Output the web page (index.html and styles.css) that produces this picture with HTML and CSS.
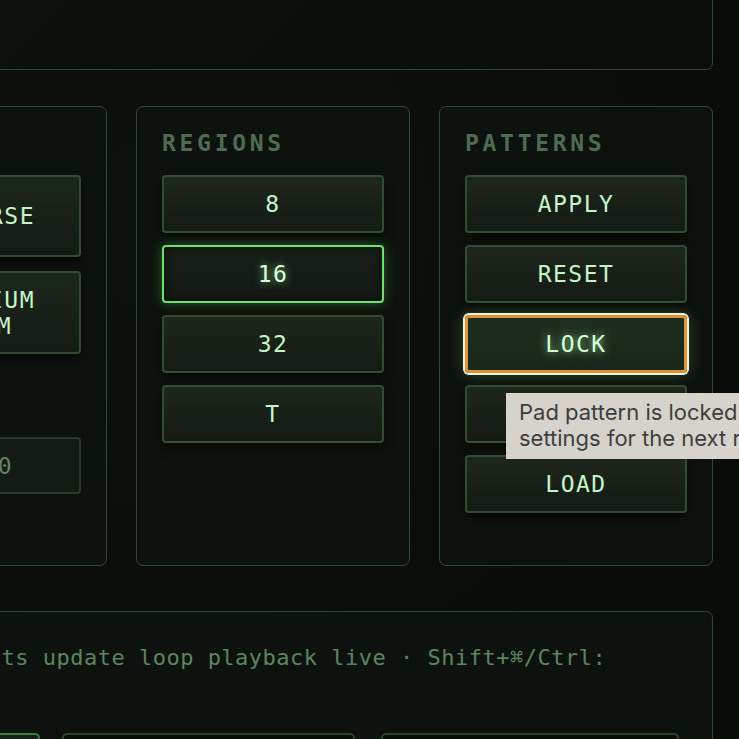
FILE: index.html
```html
<!DOCTYPE html>
<html>

<head>
    <title>Loop Pads</title>
    <link rel="stylesheet" href="styles.css">
</head>

<body>

    <div class="app">
        <section class="panel top-panel"></section>

        <div class="columns">
            <section class="panel col">
                <h3 class="label">MODES</h3>
                <button class="pad tall">&lt; REVERSE</button>
                <button class="pad two-line">X LITHIUM<br>RANDOM</button>
                <label class="field-label" for="seed">SEED</label>
                <input class="field" id="seed" type="text" placeholder="SEED 0">
            </section>

            <section class="panel col">
                <h3 class="label">REGIONS</h3>
                <button class="pad">8</button>
                <button class="pad active">16</button>
                <button class="pad">32</button>
                <button class="pad">T</button>
            </section>

            <section class="panel col">
                <h3 class="label">PATTERNS</h3>
                <button class="pad">APPLY</button>
                <button class="pad">RESET</button>
                <button class="pad locked">LOCK</button>
                <button class="pad">SAVE</button>
                <button class="pad">LOAD</button>
            </section>
        </div>

        <section class="panel hint-panel">
            <p class="hint">Region edits update loop playback live · Shift+⌘/Ctrl:</p>
            <div class="hint-row">
                <button class="slot on"></button>
                <input class="slot-field slot-b" type="text">
                <input class="slot-field slot-c" type="text">
            </div>
        </section>
    </div>

    <div class="tooltip">Pad pattern is locked and keeps its<br>settings for the next recording</div>

</body>

</html>
```

FILE: styles.css
```css
html,
body {
    margin: 0;
    height: 100%;
    overflow: hidden;
}

body {
    background: radial-gradient(circle at 20% 30%, #0d110d 0%, #0a0c0a 70%);
    font-family: "DejaVu Sans Mono", monospace;
    color: #c4f4c8;
}

.app {
    width: 880px;
    margin-left: -167px;
}

.panel {
    box-sizing: border-box;
    background: #0e120e;
    border: 1.5px solid #2e4c32;
    border-radius: 7px;
}

.top-panel {
    height: 120px;
    margin-top: -50px;
    background: linear-gradient(135deg, #0d120e, #0a0d0a);
}

.columns {
    display: grid;
    grid-template-columns: repeat(3, 1fr);
    gap: 29px;
    margin-top: 36px;
    height: 460px;
}

.col {
    display: flex;
    flex-direction: column;
    padding: 23px 25px;
}

.label {
    margin: 0 0 19px 0;
    font-size: 23px;
    line-height: 26px;
    font-weight: bold;
    letter-spacing: 3.7px;
    color: #4d6b52;
}

.pad {
    box-sizing: border-box;
    width: 100%;
    margin: 0 0 12px 0;
    padding: 14px 0;
    font-family: inherit;
    font-size: 23px;
    line-height: 26px;
    letter-spacing: 1.5px;
    color: #c4f4c8;
    background: linear-gradient(180deg, #1d261d, #141a14);
    border: 2px solid #304d34;
    border-radius: 4px;
    box-shadow: 0 5px 10px rgba(0, 0, 0, 0.55);
    cursor: pointer;
}

.pad.tall {
    padding: 26px 8px 26px 0;
    margin-bottom: 14px;
}

.pad.two-line {
    padding: 14px 8px 13px 0;
}

.pad.active {
    border-color: #6fe06f;
    background: linear-gradient(180deg, #171e17, #131913);
    box-shadow: 0 0 12px rgba(100, 225, 100, 0.35), inset 0 0 10px rgba(0, 0, 0, 0.5);
    color: #dcffdc;
    text-shadow: 0 0 8px rgba(160, 255, 160, 0.7);
}

.pad.locked {
    padding: 13px 0;
    border: 3px solid #dd9533;
    background: linear-gradient(180deg, #1f2d20, #1a261b);
    box-shadow: 0 0 0 2px #f3f0e7, 0 0 16px rgba(120, 225, 120, 0.35);
    color: #d6ffd6;
    text-shadow: 0 0 9px rgba(160, 255, 160, 0.85);
}

.field-label {
    margin: 15px 0 30px 0;
    font-size: 20px;
    line-height: 26px;
    letter-spacing: 3px;
    color: #4d6b52;
}

.field {
    box-sizing: border-box;
    width: 100%;
    height: 57px;
    padding: 0;
    text-align: center;
    font-family: inherit;
    font-size: 23px;
    color: #c4f4c8;
    background: #141a14;
    border: 2px solid #243a27;
    border-radius: 4px;
}

.field::placeholder {
    color: #65806a;
}

.hint-panel {
    margin-top: 45px;
    height: 200px;
    padding: 31px 33px 0 30px;
}

.hint {
    margin: 0;
    font-size: 22px;
    line-height: 30px;
    letter-spacing: 0.5px;
    color: #5b8560;
    white-space: nowrap;
}

.hint-row {
    display: flex;
    margin-top: 60px;
    margin-left: -8px;
}

.slot {
    flex: 1;
    height: 50px;
    background: #142014;
    border: 2px solid #3b7a3f;
    border-radius: 5px;
}

.slot-field {
    box-sizing: border-box;
    height: 50px;
    background: #0a0c0a;
    border: 2px solid #27432b;
    border-radius: 5px;
}

.slot-b {
    width: 293px;
    margin-left: 22px;
}

.slot-c {
    width: 298px;
    margin-left: 26px;
}

/* native-looking hover tip over the pattern buttons */
.tooltip {
    position: absolute;
    left: 506px;
    top: 393px;
    padding: 6px 13px 8px;
    font-family: Inter, "Noto Sans", sans-serif;
    font-size: 22px;
    line-height: 26px;
    color: #3e3e3c;
    background: #d6d3cd;
    white-space: nowrap;
}
```
